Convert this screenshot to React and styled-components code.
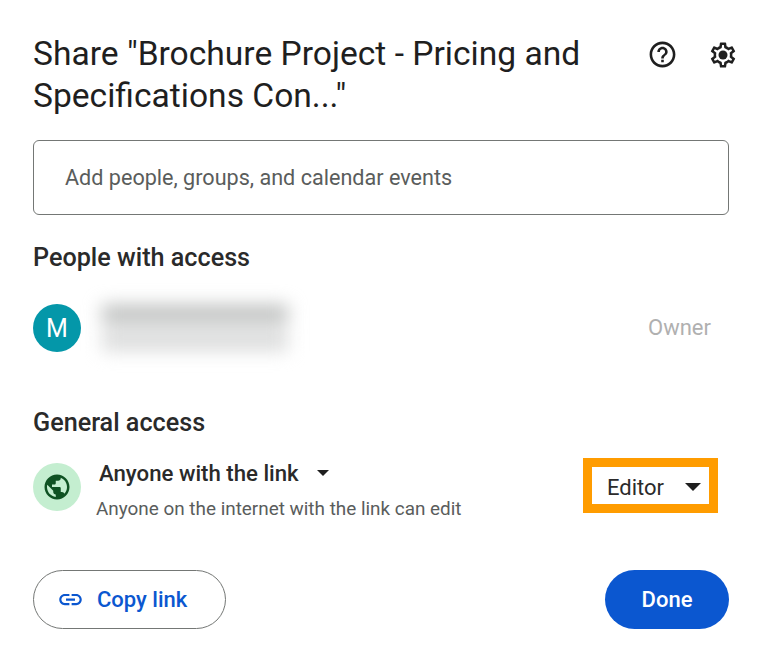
import React from "react"
import styled, { createGlobalStyle } from "styled-components"

const GlobalStyle = createGlobalStyle`
  html, body {
    margin: 0;
    padding: 0;
    background: #fff;
    font-family: Roboto, "Liberation Sans", sans-serif;
    color: #1f1f1f;
  }
`

const Dialog = styled.div`
  width: 762px;
  height: 662px;
  box-sizing: border-box;
  padding: 33px 33px 0;
  overflow: hidden;
`

const Header = styled.header`
  display: flex;
  justify-content: space-between;
  align-items: flex-start;
`

const Title = styled.h1`
  margin: 0;
  width: 580px;
  font-size: 33.6px;
  line-height: 42px;
  font-weight: 400;
`

const HeaderIcons = styled.div`
  display: flex;
  align-items: center;
  gap: 30px;
  margin: 6px -9px 0 0;
  color: #1f1f1f;
`

const PeopleInput = styled.div`
  display: flex;
  align-items: center;
  box-sizing: border-box;
  width: 696px;
  height: 75px;
  margin-top: 23px;
  padding-left: 31px;
  border: 1.5px solid #747775;
  border-radius: 6px;
  font-size: 21.6px;
  color: #5a5d5c;
`

const SectionTitle = styled.h2`
  margin: ${p => p.$top}px 0 0;
  font-size: 25.2px;
  line-height: 32px;
  font-weight: 500;
  color: #2a2a2a;
`

const PersonRow = styled.div`
  display: flex;
  align-items: center;
  margin-top: 30px;
  height: 48px;
`

const Avatar = styled.div`
  display: flex;
  align-items: center;
  justify-content: center;
  flex: none;
  width: 48px;
  height: 48px;
  border-radius: 50%;
  background: #0497a9;
  color: #fff;
  font-size: 25px;
`

const BlurredName = styled.div`
  display: flex;
  flex-direction: column;
  gap: 6px;
  margin-left: 21px;
  filter: blur(9px);
`

const BlurLine = styled.div`
  width: ${p => p.$width}px;
  height: ${p => p.$height}px;
  background: ${p => p.$color};
`

const Owner = styled.span`
  margin: 0 18px 2px auto;
  font-size: 22px;
  color: #b0b0b0;
`

const AccessRow = styled.div`
  display: flex;
  align-items: flex-start;
  margin-top: 19px;
`

const GlobeBadge = styled.div`
  display: flex;
  align-items: center;
  justify-content: center;
  flex: none;
  width: 48px;
  height: 48px;
  margin-top: 5px;
  border-radius: 50%;
  background: #c4eed0;
  color: #0f5223;
`

const AccessText = styled.div`
  margin-left: 15px;
`

const AccessSelect = styled.div`
  display: flex;
  align-items: center;
  gap: 18px;
  padding-left: 3px;
  font-size: 22.2px;
  line-height: 30px;
  font-weight: 500;
  color: #2a2a2a;
`

const AccessHint = styled.div`
  margin-top: 7px;
  font-size: 18.9px;
  line-height: 28px;
  color: #5a5d5c;
`

const Caret = styled.span`
  display: block;
  width: 0;
  height: 0;
  border-left: ${p => p.$size}px solid transparent;
  border-right: ${p => p.$size}px solid transparent;
  border-top: ${p => p.$size}px solid #1f1f1f;
`

const RoleBox = styled.div`
  display: flex;
  align-items: center;
  justify-content: space-between;
  box-sizing: border-box;
  width: 135px;
  height: 55px;
  margin-left: auto;
  margin-right: 11px;
  padding: 3px 8px 0 15px;
  border: 9px solid #ff9c00;
  font-size: 22px;
  color: #2b2b2b;
`

const Footer = styled.footer`
  display: flex;
  justify-content: space-between;
  margin-top: 47px;
`

const CopyButton = styled.button`
  display: flex;
  align-items: center;
  gap: 13px;
  box-sizing: border-box;
  width: 193px;
  height: 59px;
  padding: 0 0 0 23px;
  border: 1.5px solid #747775;
  border-radius: 30px;
  background: #fff;
  color: #0b57d0;
  font-family: inherit;
  font-size: 22px;
  font-weight: 500;
`

const DoneButton = styled.button`
  width: 124px;
  height: 59px;
  padding: 0;
  border: 0;
  border-radius: 30px;
  background: #0b57d0;
  color: #fff;
  font-family: inherit;
  font-size: 22px;
  font-weight: 500;
`

const Icon = ({ size, d, children }) => (
  <svg width={size} height={size} viewBox="0 0 24 24" fill="currentColor">
    {d && <path d={d} />}
    {children}
  </svg>
)

const helpPath =
  "M11 18h2v-2h-2v2zm1-16C6.48 2 2 6.48 2 12s4.48 10 10 10 10-4.48 10-10S17.52 2 12 2zm0 18c-4.41 0-8-3.59-8-8s3.59-8 8-8 8 3.59 8 8-3.59 8-8 8zm0-14c-2.21 0-4 1.79-4 4h2c0-1.1.9-2 2-2s2 .9 2 2c0 2-3 1.75-3 5h2c0-2.25 3-2.5 3-5 0-2.21-1.79-4-4-4z"
const gearPath =
  "M19.43 12.98c.04-.32.07-.64.07-.98 0-.34-.03-.66-.07-.98l2.11-1.65c.19-.15.24-.42.12-.64l-2-3.46c-.09-.16-.26-.25-.44-.25-.06 0-.12.01-.17.03l-2.49 1c-.52-.4-1.08-.73-1.69-.98l-.38-2.65C14.46 2.18 14.25 2 14 2h-4c-.25 0-.46.18-.49.42l-.38 2.65c-.61.25-1.17.59-1.69.98l-2.49-1c-.06-.02-.12-.03-.18-.03-.17 0-.34.09-.43.25l-2 3.46c-.13.22-.07.49.12.64l2.11 1.65c-.04.32-.07.65-.07.98 0 .33.03.66.07.98l-2.11 1.65c-.19.15-.24.42-.12.64l2 3.46c.09.16.26.25.44.25.06 0 .12-.01.17-.03l2.49-1c.52.4 1.08.73 1.69.98l.38 2.65c.03.24.24.42.49.42h4c.25 0 .46-.18.49-.42l.38-2.65c.61-.25 1.17-.59 1.69-.98l2.49 1c.06.02.12.03.18.03.17 0 .34-.09.43-.25l2-3.46c.12-.22.07-.49-.12-.64l-2.11-1.65zm-1.98-1.71c.04.31.05.52.05.73 0 .21-.02.43-.05.73l-.14 1.13.89.7 1.08.84-.7 1.21-1.27-.51-1.04-.42-.9.68c-.43.32-.84.56-1.25.73l-1.06.43-.16 1.13-.2 1.35h-1.4l-.19-1.35-.16-1.13-1.06-.43c-.43-.18-.83-.41-1.23-.71l-.91-.7-1.06.43-1.27.51-.7-1.21 1.08-.84.89-.7-.14-1.13c-.03-.31-.05-.54-.05-.74s.02-.43.05-.73l.14-1.13-.89-.7-1.08-.84.7-1.21 1.27.51 1.04.42.9-.68c.43-.32.84-.56 1.25-.73l1.06-.43.16-1.13.2-1.35h1.39l.19 1.35.16 1.13 1.06.43c.43.18.83.41 1.23.71l.91.7 1.06-.43 1.27-.51.7 1.21-1.07.85-.89.7.14 1.13z"
const globePath =
  "M12 2C6.48 2 2 6.48 2 12s4.48 10 10 10 10-4.48 10-10S17.52 2 12 2zm-1 17.93c-3.95-.49-7-3.85-7-7.93 0-.62.08-1.21.21-1.79L9 15v1c0 1.1.9 2 2 2v1.93zm6.9-2.54c-.26-.81-1-1.39-1.9-1.39h-1v-3c0-.55-.45-1-1-1H8v-2h2c.55 0 1-.45 1-1V7h2c1.1 0 2-.9 2-2v-.41c2.93 1.19 5 4.06 5 7.41 0 2.08-.8 3.97-2.1 5.39z"
const linkPath =
  "M3.9 12c0-1.71 1.39-3.1 3.1-3.1h4V7H7c-2.76 0-5 2.24-5 5s2.24 5 5 5h4v-1.9H7c-1.71 0-3.1-1.39-3.1-3.1zM8 13h8v-2H8v2zm9-6h-4v1.9h4c1.71 0 3.1 1.39 3.1 3.1s-1.39 3.1-3.1 3.1h-4V17h4c2.76 0 5-2.24 5-5s-2.24-5-5-5z"

function App() {
  return (
    <Dialog>
      <GlobalStyle />
      <Header>
        <Title>Share "Brochure Project - Pricing and Specifications Con..."</Title>
        <HeaderIcons>
          <Icon size={31} d={helpPath} />
          <Icon size={30} d={gearPath}>
            <circle cx="12" cy="12" r="3.6" />
          </Icon>
        </HeaderIcons>
      </Header>

      <PeopleInput>Add people, groups, and calendar events</PeopleInput>

      <SectionTitle $top={27}>People with access</SectionTitle>
      <PersonRow>
        <Avatar>M</Avatar>
        <BlurredName>
          <BlurLine $width={186} $height={18} $color="#bdbfbe" />
          <BlurLine $width={186} $height={22} $color="#dcdddd" />
        </BlurredName>
        <Owner>Owner</Owner>
      </PersonRow>

      <SectionTitle $top={55}>General access</SectionTitle>
      <AccessRow>
        <GlobeBadge>
          <Icon size={30} d={globePath} />
        </GlobeBadge>
        <AccessText>
          <AccessSelect>
            Anyone with the link
            <Caret $size={6} />
          </AccessSelect>
          <AccessHint>Anyone on the internet with the link can edit</AccessHint>
        </AccessText>
        <RoleBox>
          Editor
          <Caret $size={8} />
        </RoleBox>
      </AccessRow>

      <Footer>
        <CopyButton>
          <Icon size={27} d={linkPath} />
          Copy link
        </CopyButton>
        <DoneButton>Done</DoneButton>
      </Footer>
    </Dialog>
  )
}

export default App
